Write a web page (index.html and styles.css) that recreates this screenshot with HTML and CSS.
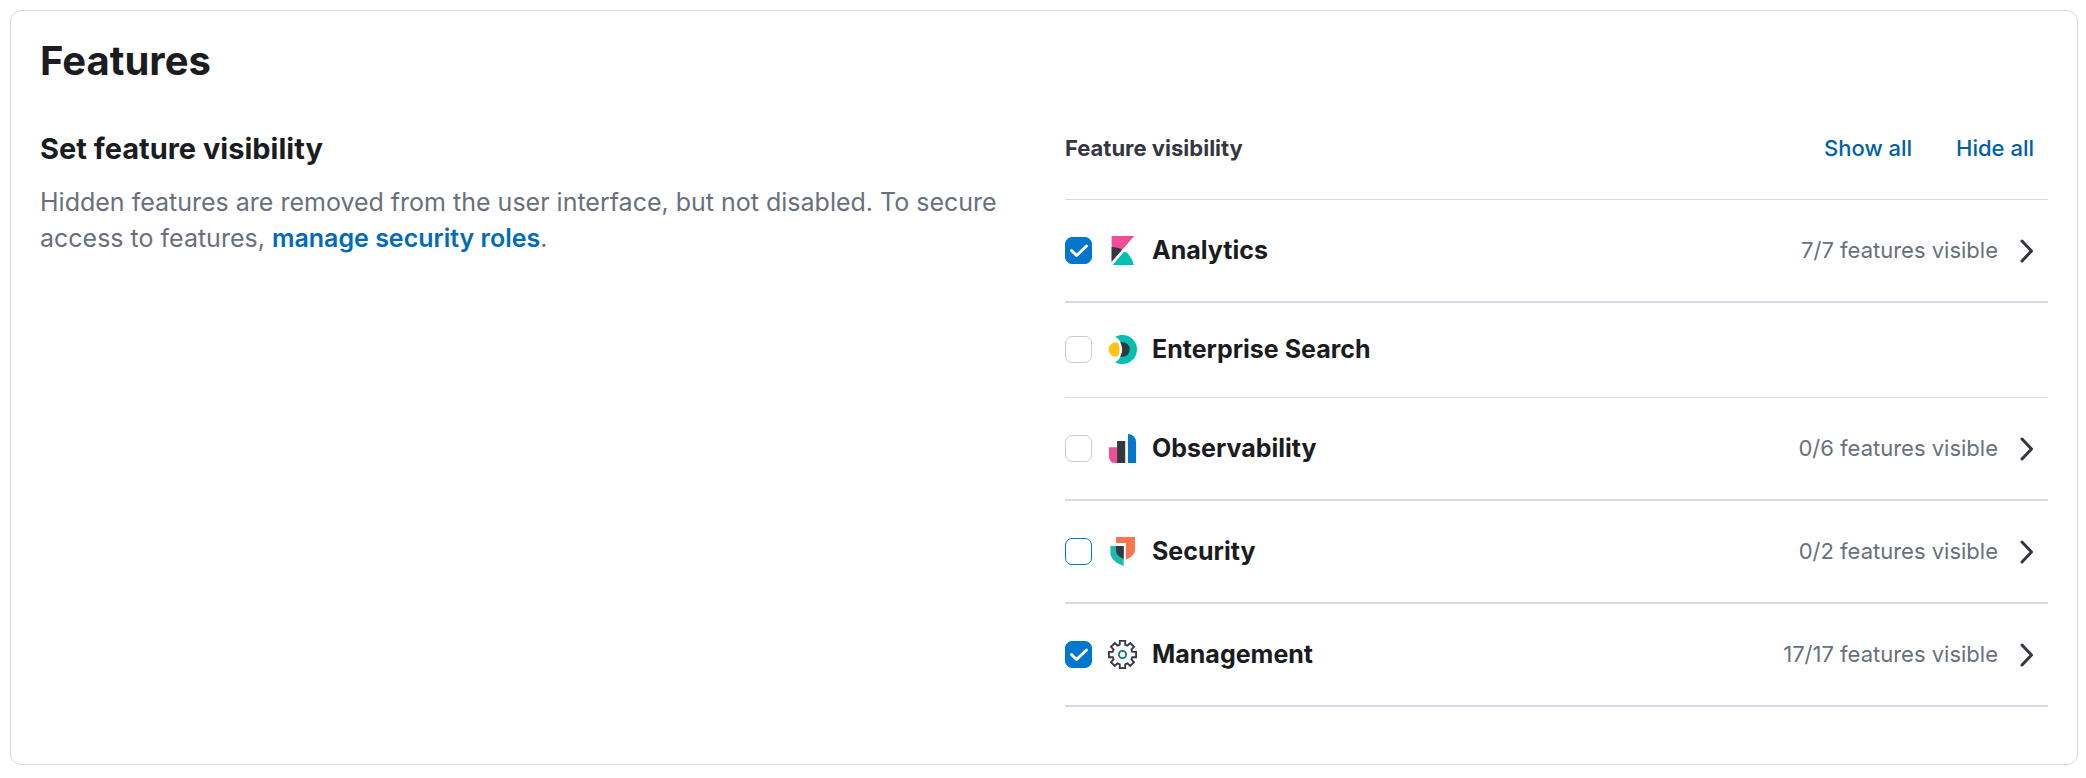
FILE: index.html
```html
<!DOCTYPE html>
<html lang="en">
<head>
    <meta charset="UTF-8">
    <meta name="viewport" content="width=device-width, initial-scale=1.0">
    <title>Features</title>
    <link rel="stylesheet" href="styles.css">
</head>
<body>
    <section class="panel">
        <h2 class="panel-title">Features</h2>
        <div class="columns">
            <div class="description">
                <h3>Set feature visibility</h3>
                <p>Hidden features are removed from the user interface, but not disabled. To secure access to features, <a href="#">manage security roles</a>.</p>
            </div>

            <div class="features">
                <div class="features-header">
                    <span class="features-label">Feature visibility</span>
                    <button class="link-button" type="button">Show all</button>
                    <button class="link-button" type="button">Hide all</button>
                </div>

                <div class="feature">
                    <span class="checkbox">
                        <input type="checkbox" id="analytics" checked>
                        <svg viewBox="0 0 27 27"><path d="M6.500 13.500l5 5L21.500 9"/></svg>
                    </span>
                    <svg class="logo" viewBox="0 0 32 32">
                        <path fill="#f04e98" d="M4 0v28.789L28.935.017z"/>
                        <path fill="#343741" d="M4 12v16.789l11.906-13.738C12.368 13.115 8.317 12 4 12"/>
                        <path fill="#fff" d="M4 28.789L16.500 14.400l2 2.200L5.200 32H4z"/>
                        <path fill="#00bfb3" d="M18.479 16.664L6.268 30.754l-1.073 1.237h23.191c-1.252-6.292-4.883-11.719-9.908-15.327"/>
                    </svg>
                    <label for="analytics">Analytics</label>
                    <span class="count">7/7 features visible</span>
                    <button class="toggle" type="button" aria-label="Expand Analytics">
                        <svg viewBox="0 0 14 26"><path d="M2 3l9.500 10L2 23"/></svg>
                    </button>
                </div>

                <div class="feature feature-simple">
                    <span class="checkbox">
                        <input type="checkbox" id="search">
                        <svg viewBox="0 0 27 27"><path d="M6.500 13.500l5 5L21.500 9"/></svg>
                    </span>
                    <svg class="logo" viewBox="0 0 32 32">
                        <path fill="#00bfb3" d="M8 1.700C10.500.600 13.200 0 16 0a16 16 0 0 1 0 32c-2.800 0-5.500-.600-8-1.700A17 17 0 0 0 8 1.700"/>
                        <path fill="#343741" d="M13.500 8H16a8 8 0 0 1 0 16h-2.500a17 17 0 0 0 0-16"/>
                        <path fill="#fec514" d="M10.800 8.300C12 10.600 12.700 13.200 12.700 16s-.700 5.400-1.900 7.700A8 8 0 1 1 10.800 8.300"/>
                    </svg>
                    <label for="search">Enterprise Search</label>
                </div>

                <div class="feature">
                    <span class="checkbox">
                        <input type="checkbox" id="observability">
                        <svg viewBox="0 0 27 27"><path d="M6.500 13.500l5 5L21.500 9"/></svg>
                    </span>
                    <svg class="logo" viewBox="0 0 32 32">
                        <path fill="#f04e98" d="M1 14.500h9V32H8a7 7 0 0 1-7-7z"/>
                        <path fill="#343741" d="M10 7.700h9V32h-9z"/>
                        <path fill="#0077cc" d="M22 0a9 9 0 0 1 9 8.500V32h-9z"/>
                    </svg>
                    <label for="observability">Observability</label>
                    <span class="count">0/6 features visible</span>
                    <button class="toggle" type="button" aria-label="Expand Observability">
                        <svg viewBox="0 0 14 26"><path d="M2 3l9.500 10L2 23"/></svg>
                    </button>
                </div>

                <div class="feature">
                    <span class="checkbox">
                        <input class="active" type="checkbox" id="security">
                        <svg viewBox="0 0 27 27"><path d="M6.500 13.500l5 5L21.500 9"/></svg>
                    </span>
                    <svg class="logo" viewBox="0 0 32 32">
                        <path fill="#fa744e" d="M8.900 0h20.800v14c0 5-3.900 8.500-9.900 10.700V6.500H8.900z"/>
                        <path fill="#1dbab0" d="M2.600 10h14.700v22C8 28.300 2.600 23.700 2.600 17z"/>
                        <path fill="#343741" d="M8.900 10h8.400v14.200C12.200 22.200 8.900 19.400 8.900 15z"/>
                    </svg>
                    <label for="security">Security</label>
                    <span class="count">0/2 features visible</span>
                    <button class="toggle" type="button" aria-label="Expand Security">
                        <svg viewBox="0 0 14 26"><path d="M2 3l9.500 10L2 23"/></svg>
                    </button>
                </div>

                <div class="feature">
                    <span class="checkbox">
                        <input type="checkbox" id="management" checked>
                        <svg viewBox="0 0 27 27"><path d="M6.500 13.500l5 5L21.500 9"/></svg>
                    </span>
                    <svg class="logo" viewBox="0 0 32 32" fill="none" stroke-width="2">
                        <path stroke="#343741" d="M13 1h6v4.200l2.500 1 3-2.900 4.200 4.200-2.900 3 1 2.500H31v6h-4.200l-1 2.500 2.900 3-4.200 4.200-3-2.900-2.500 1V31h-6v-4.200l-2.500-1-3 2.900-4.200-4.200 2.900-3-1-2.500H1v-6h4.200l1-2.500-2.900-3 4.200-4.200 3 2.900 2.500-1z"/>
                        <circle stroke="#017d73" cx="16" cy="16" r="4"/>
                    </svg>
                    <label for="management">Management</label>
                    <span class="count">17/17 features visible</span>
                    <button class="toggle" type="button" aria-label="Expand Management">
                        <svg viewBox="0 0 14 26"><path d="M2 3l9.500 10L2 23"/></svg>
                    </button>
                </div>
            </div>
        </div>
    </section>
</body>
</html>
```
FILE: styles.css
```css
body {
    margin: 10px 8px 10px 10px;
    font-family: Inter, sans-serif;
    color: #343741;
    background: #fff;
}
h2, h3, p {
    margin: 0;
}
button {
    padding: 0;
    border: none;
    background: none;
    font-family: inherit;
    cursor: pointer;
}
.panel {
    padding: 26px 29px 57px;
    border: 1px solid #d3dae6;
    border-radius: 11px;
}
.panel-title {
    font-size: 40px;
    line-height: 48px;
    font-weight: 700;
    color: #1a1c21;
}
.columns {
    display: grid;
    grid-template-columns: 1fr 1fr;
    gap: 42px;
    margin-top: 39px;
}
.description h3 {
    font-size: 29px;
    line-height: 50px;
    font-weight: 700;
    color: #1a1c21;
}
.description p {
    margin-top: 10px;
    font-size: 25px;
    line-height: 36px;
    color: #69707d;
}
.description a {
    color: #006bb8;
    font-weight: 600;
    text-decoration: none;
}
.features-header {
    display: flex;
    align-items: center;
    gap: 44px;
    padding: 0 14px 27px 0;
    border-bottom: 1px solid #d3dae6;
    font-size: 22px;
    line-height: 48px;
}
.features-label {
    flex: 1;
    font-weight: 700;
}
.link-button {
    font-size: 22px;
    line-height: 48px;
    font-weight: 500;
    color: #0061a6;
}
.feature {
    display: flex;
    align-items: center;
    padding: 32px 14px 32px 0;
    border-bottom: 2px solid #d3dae6;
    line-height: 37px;
}
.feature-simple {
    padding: 28px 14px 29px 0;
    border-bottom-width: 1px;
}
.checkbox {
    display: grid;
    width: 27px;
    height: 27px;
    margin-bottom: 1px;
}
.checkbox input,
.checkbox svg {
    grid-area: 1 / 1;
    width: 27px;
    height: 27px;
}
.checkbox input {
    appearance: none;
    margin: 0;
    border: 1px solid #c9cbcd;
    border-radius: 7px;
    background: #fff;
}
.checkbox input.active {
    border-color: #0077cc;
}
.checkbox input:checked {
    border-color: #0077cc;
    background: #0077cc;
}
.checkbox svg {
    visibility: hidden;
    fill: none;
    stroke: #fff;
    stroke-width: 3;
    stroke-linecap: round;
    stroke-linejoin: round;
    pointer-events: none;
}
.checkbox input:checked + svg {
    visibility: visible;
}
.logo {
    width: 29px;
    height: 29px;
    margin: 0 15px 0 16px;
}
.feature label {
    flex: 1;
    font-size: 25px;
    font-weight: 700;
    color: #1a1c21;
}
.count {
    font-size: 22px;
    color: #69707d;
}
.toggle {
    display: flex;
    margin-left: 22px;
}
.toggle svg {
    width: 14px;
    height: 26px;
    fill: none;
    stroke: #343741;
    stroke-width: 3;
    stroke-linecap: round;
    stroke-linejoin: round;
}
```
